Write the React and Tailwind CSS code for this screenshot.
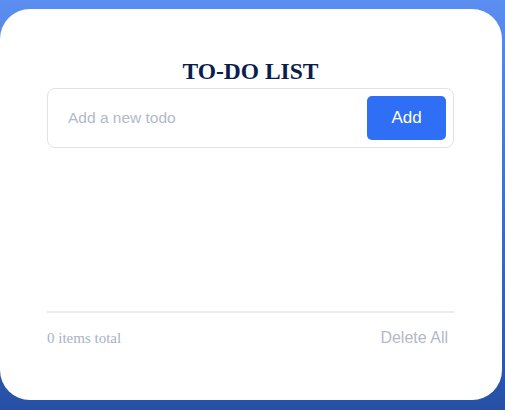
export default function App() {
  return (
    <div className="w-[505px] h-[410px] overflow-hidden bg-gradient-to-b from-[#5c8df1] to-[#2550a6] pt-[9px]">
      <div className="w-[502px] h-[391px] bg-white rounded-[30px] pl-[47px] pr-[48px] pt-[50px] flex flex-col">
        <h1 className="text-center text-[23.5px] leading-[24px] font-bold text-[#0b1d4d] [font-family:'Liberation_Serif',serif]">
          TO-DO LIST
        </h1>
        <div className="mt-[5px] h-[60px] border border-[#e1e2e6] rounded-[8px] flex items-center pl-[20px] pr-[7px]">
          <input
            className="flex-1 min-w-0 outline-none text-[15.5px] text-[#333] placeholder:text-[#b3b9c8] [font-family:'Liberation_Sans',sans-serif]"
            placeholder="Add a new todo"
          />
          <button className="w-[79px] h-[44px] rounded-[5px] bg-[#2f6ff6] text-white text-[17px] [font-family:'Liberation_Sans',sans-serif]">
            Add
          </button>
        </div>
        <div className="flex-1" />
        <div className="border-t-2 border-[#ececec]" />
        <div className="mt-[14px] mb-[51px] flex justify-between items-center h-[22px]">
          <span className="text-[15px] text-[#a9b1c3] [font-family:'Liberation_Serif',serif]">0 items total</span>
          <span className="text-[16px] text-[#b3b9c8] mr-[6px] [font-family:'Liberation_Sans',sans-serif]">Delete All</span>
        </div>
      </div>
    </div>
  );
}
